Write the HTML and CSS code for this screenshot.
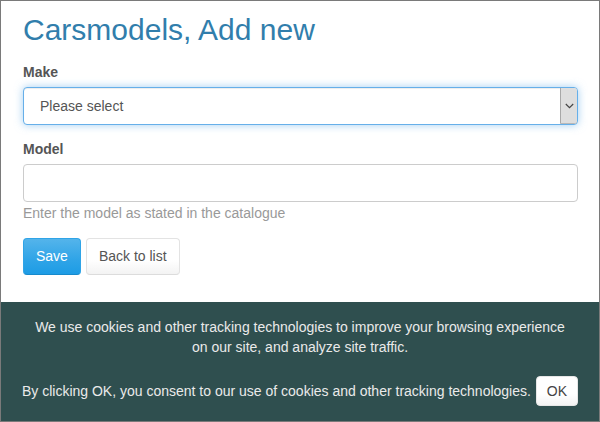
FILE: index.html
```html
<!DOCTYPE html>
<html lang="en">
<head>
<meta charset="utf-8">
<title>Carsmodels, Add new</title>
<link rel="stylesheet" href="styles.css">
</head>
<body>
<div class="frame">
  <main class="content">
    <h2 class="title">Carsmodels, Add new</h2>
    <div class="form-group">
      <label class="label">Make</label>
      <div class="select">
        <span class="select-text">Please select</span>
        <span class="select-arrow">
          <svg width="9" height="6" viewBox="0 0 9 6"><path d="M0.8 1 L4.5 4.6 L8.2 1" fill="none" stroke="#444" stroke-width="1.2"/></svg>
        </span>
      </div>
    </div>
    <div class="form-group">
      <label class="label">Model</label>
      <div class="input"></div>
      <p class="help">Enter the model as stated in the catalogue</p>
    </div>
    <div class="actions">
      <button class="btn btn-primary">Save</button>
      <button class="btn btn-default">Back to list</button>
    </div>
  </main>
  <footer class="cookie">
    <p class="cookie-msg">We use cookies and other tracking technologies to improve your browsing experience<br>on our site, and analyze site traffic.</p>
    <p class="cookie-consent">By clicking OK, you consent to our use of cookies and other tracking technologies. <button class="btn-ok">OK</button></p>
  </footer>
</div>
</body>
</html>
```

FILE: styles.css
```css
html, body {
  margin: 0;
  padding: 0;
  height: 100%;
}
body {
  font-family: "Liberation Sans", Arial, sans-serif;
  font-size: 14px;
  line-height: 20px;
  color: #555;
  background: #fff;
}
.frame {
  box-sizing: border-box;
  height: 422px;
  border: 1px solid #7a7a7a;
  display: flex;
  flex-direction: column;
}
.content {
  padding: 0 21px 0 22px;
}
.title {
  margin: 12px 0 16px;
  font-size: 30px;
  line-height: 33px;
  font-weight: normal;
  color: #317eac;
}
.form-group {
  margin-bottom: 14px;
}
.label {
  display: block;
  font-weight: bold;
  color: #555;
  margin-bottom: 5px;
}
.select {
  box-sizing: border-box;
  height: 38px;
  border: 1px solid #66afe9;
  border-radius: 4px;
  box-shadow: inset 0 1px 1px rgba(0,0,0,.075), 0 0 8px rgba(102,175,233,.6);
  display: flex;
  align-items: stretch;
  padding-left: 16px;
  background: #fff;
  color: #555;
}
.select-text {
  flex: 1;
  display: flex;
  align-items: center;
}
.select-arrow {
  width: 16px;
  background: #dedede;
  border-left: 1px solid #a8a8a8;
  border-bottom: 1px solid #b8b8b8;
  border-radius: 0 3px 3px 0;
  display: flex;
  align-items: center;
  justify-content: center;
}
.input {
  box-sizing: border-box;
  height: 38px;
  border: 1px solid #ccc;
  border-radius: 4px;
  background: #fff;
}
.help {
  margin: 1px 0 0;
  color: #999;
}
.actions {
  display: flex;
  gap: 5px;
  margin-top: 15px;
}
.btn {
  font-family: inherit;
  font-size: 14px;
  line-height: 20px;
  padding: 7px 12px 8px;
  border-radius: 4px;
  height: 37px;
  box-sizing: border-box;
}
.btn-primary {
  color: #fff;
  border: 1px solid #2fa4e7;
  border-bottom-color: #178acc;
  background-image: linear-gradient(#54b4eb, #2fa4e7 60%, #1d9ce5);
}
.btn-default {
  color: #555;
  border: 1px solid #e3e3e3;
  border-bottom-color: #dcdcdc;
  background-image: linear-gradient(#fff, #fff 60%, #f3f3f3);
}
.cookie {
  margin-top: auto;
  background: #2f4f4f;
  color: #eaeaea;
  text-align: center;
  padding: 15px 15px 15px;
}
.cookie-msg {
  margin: 0 0 19px;
}
.cookie-consent {
  margin: 0;
}
.btn-ok {
  font-family: inherit;
  font-size: 14px;
  line-height: 20px;
  padding: 4px 10px;
  color: #444;
  border: 1px solid #e6e6e6;
  border-radius: 4px;
  background-image: linear-gradient(#fff, #fff 60%, #f3f3f3);
  margin-left: 1px;
}
```
